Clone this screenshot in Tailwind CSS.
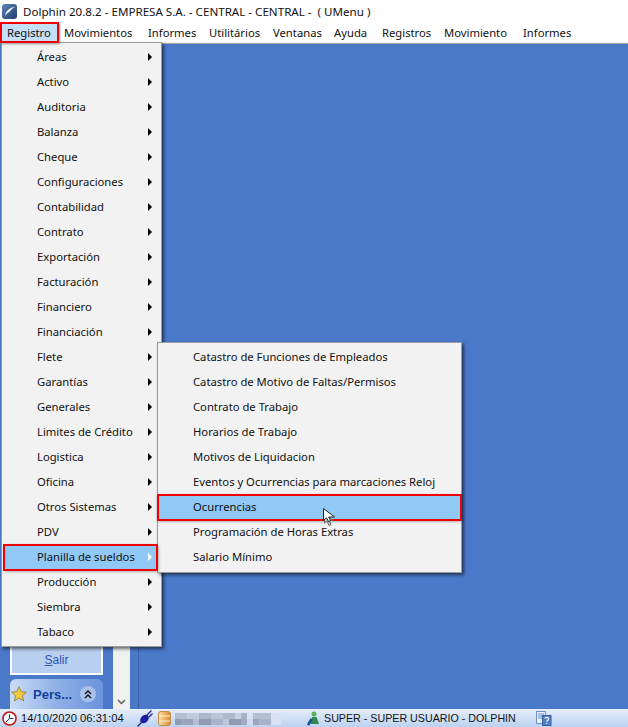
<!DOCTYPE html>
<html lang="es">
<head>
<meta charset="UTF-8">
<title>Dolphin</title>
<script src="https://cdn.jsdelivr.net/npm/@tailwindcss/browser@4"></script>
</head>
<body class="w-[628px] h-[727px] overflow-hidden relative font-['Noto_Sans',sans-serif] text-[11.25px] text-[#111]">
<div class="flex flex-col h-[727px]">
  <!-- title bar -->
  <div class="h-[22px] bg-white flex items-center pl-[2px] gap-[6px] shrink-0">
    <svg width="15" height="15" viewBox="0 0 15 15" class="mt-[1px]"><defs><linearGradient id="lg" x1="0" y1="0" x2="1" y2="1"><stop offset="0" stop-color="#5f86b8"/><stop offset="1" stop-color="#1f3f70"/></linearGradient></defs><rect width="15" height="15" rx="3" fill="url(#lg)"/><path d="M3 12C3.500 7.500 7 3.500 13 3C10.500 4.500 8.500 5.500 7.500 8C5.800 8.500 4.300 10 3 12Z" fill="#eef4fb"/></svg>
    <span class="text-[11.6px] leading-none mt-[2px] whitespace-nowrap">Dolphin 20.8.2 - EMPRESA S.A. - CENTRAL - CENTRAL -&nbsp; ( UMenu )</span>
  </div>
  <!-- menu bar -->
  <div class="h-[20px] bg-white flex items-center pl-[7px] pt-[2px] shrink-0">
    <span class="w-[57px]">Registro</span>
    <span class="w-[84px]">Movimientos</span>
    <span class="w-[61px]">Informes</span>
    <span class="w-[64px]">Utilitários</span>
    <span class="w-[61px]">Ventanas</span>
    <span class="w-[48px]">Ayuda</span>
    <span class="w-[62px]">Registros</span>
    <span class="w-[79px]">Movimiento</span>
    <span>Informes</span>
  </div>
  <div class="h-[2px] bg-[#f0f0f0] border-b border-[#a8a8a8] shrink-0"></div>
  <!-- work area -->
  <div class="flex-1 flex bg-[#4a79c9] min-h-0">
    <div class="w-[139px] shrink-0 flex border-r border-[#3b62a6]">
      <div class="w-[113px] shrink-0 flex flex-col justify-end pl-[10px] pr-[10px]">
        <div class="h-[29px] bg-[#b9cff0] border-x-2 border-b-2 border-white flex items-center justify-center text-[#2a56b5] font-['Liberation_Sans',sans-serif] text-[12px]"><span><span class="underline">S</span>alir</span></div>
        <div class="h-[30px] mt-[4px] rounded-t-[6px] bg-gradient-to-r from-[#cbdcf6] via-[#8fb0e6] to-[#6c94dc] flex items-center pl-[1px]">
          <svg width="16" height="16" viewBox="0 0 16 16"><path d="M8 .8L10.200 5.700L15.500 6.200L11.400 9.700L12.700 15L8 12.100L3.300 15L4.600 9.700L.5 6.200L5.800 5.700Z" fill="#f5c93c" stroke="#857a45" stroke-width="0.800"/></svg>
          <span class="ml-[6px] w-[47px] font-bold text-[#12409e] text-[13px] leading-none font-['Liberation_Sans',sans-serif]">Pers...</span>
          <span class="w-[16px] h-[16px] rounded-full bg-[#a8c0ea] flex items-center justify-center">
            <svg width="8" height="9" viewBox="0 0 8 9" fill="none" stroke="#111" stroke-width="1.300"><path d="M1 4L4 1L7 4M1 8L4 5L7 8"/></svg>
          </span>
        </div>
      </div>
      <div class="w-[17px] shrink-0 bg-[#f0f0f0] flex flex-col justify-end items-center pb-[4px]">
        <svg width="9" height="6" viewBox="0 0 9 6" fill="none" stroke="#606060" stroke-width="1.500"><path d="M1 1L4.500 4.500L8 1"/></svg>
      </div>
    </div>
    <div class="flex-1"></div>
  </div>
  <!-- status bar -->
  <div class="h-[18px] shrink-0 border-t border-[#e6eefb] bg-gradient-to-b from-[#e3edfb] to-[#bcd2f1] flex items-center font-['Liberation_Sans',sans-serif] text-[11.2px]">
    <svg class="ml-[2px]" width="15" height="15" viewBox="0 0 15 15"><circle cx="7.500" cy="7.500" r="6.500" fill="#fff" stroke="#c01818" stroke-width="1.600"/><path d="M7.500 3.500V7.500H11.500M4 11L7.500 7.500" stroke="#1a2a6a" stroke-width="1" fill="none"/></svg>
    <span class="ml-[4px] w-[116px] whitespace-nowrap leading-none">14/10/2020 06:31:04</span>
    <svg width="16" height="17" viewBox="0 0 16 17"><path d="M.5 16.500L4.500 12.500" stroke="#1c1c9c" stroke-width="1.200"/><ellipse cx="7.500" cy="9" rx="3.600" ry="5" transform="rotate(45 7.500 9)" fill="#1c1c9c"/><path d="M10 5L14.500 .5M12 7L15.500 3.500" stroke="#1c1c9c" stroke-width="1.200"/></svg>
    <svg class="ml-[5px]" width="13" height="15" viewBox="0 0 13 15"><defs><linearGradient id="db" x1="0" x2="1" y1="0" y2="0"><stop offset="0" stop-color="#fbe0a8"/><stop offset="1" stop-color="#d88a2c"/></linearGradient></defs><rect x=".5" y=".5" width="12" height="14" rx="2.500" fill="url(#db)" stroke="#c48a48"/><path d="M1 5H12M1 10H12" stroke="#fff3d6" stroke-width="1"/></svg>
    <svg class="ml-[4px]" width="106" height="12" viewBox="0 0 106 12" shape-rendering="crispEdges">
      <rect width="106" height="12" fill="#cfdaed"/>
      <rect x="0" y="0" width="12" height="6" fill="#b4bfd2"/><rect x="12" y="0" width="12" height="6" fill="#c2cbdb"/><rect x="24" y="0" width="12" height="6" fill="#aab6cb"/><rect x="36" y="0" width="12" height="6" fill="#bcc6d8"/><rect x="48" y="0" width="12" height="6" fill="#aeb9cc"/><rect x="60" y="0" width="6" height="6" fill="#c8d2e3"/><rect x="66" y="0" width="6" height="6" fill="#a9b4c8"/><rect x="72" y="0" width="6" height="6" fill="#dbe4f3"/><rect x="78" y="0" width="18" height="6" fill="#b4bfd2"/>
      <rect x="0" y="6" width="6" height="6" fill="#8e9bb2"/><rect x="6" y="6" width="12" height="6" fill="#98a4ba"/><rect x="18" y="6" width="6" height="6" fill="#b4bfd2"/><rect x="24" y="6" width="12" height="6" fill="#8e9bb2"/><rect x="36" y="6" width="12" height="6" fill="#a9b4c8"/><rect x="48" y="6" width="6" height="6" fill="#bcc6d8"/><rect x="54" y="6" width="12" height="6" fill="#8e9bb2"/><rect x="66" y="6" width="6" height="6" fill="#a0acc2"/><rect x="72" y="6" width="6" height="6" fill="#cfdaed"/><rect x="78" y="6" width="6" height="6" fill="#9aa6bc"/><rect x="84" y="6" width="12" height="6" fill="#a9b4c8"/>
      <rect x="96" y="0" width="10" height="12" fill="#d8e2f2"/>
    </svg>
    <svg class="ml-[26px]" width="13" height="15" viewBox="0 0 13 15"><circle cx="7" cy="3" r="2.500" fill="#5fb05a"/><path d="M3 13L5 6H9.500L12 13Z" fill="#2e8a4a"/><path d="M1 14L4.500 8" stroke="#1c4f9c" stroke-width="2.500"/></svg>
    <span class="ml-[4px] w-[212px] text-[10.7px] leading-none whitespace-nowrap">SUPER - SUPER USUARIO - DOLPHIN</span>
    <svg width="16" height="15" viewBox="0 0 16 15"><rect x=".5" y=".5" width="9" height="12" fill="#e9f0fb" stroke="#6f8fc4"/><path d="M2 3H8M2 5H8M2 7H8" stroke="#6f8fc4"/><rect x="6.500" y="4.500" width="8.500" height="10" fill="#4f7fc9" stroke="#33609f"/><path d="M9 7.500C9.500 6 12.500 6 12.500 8C12.500 9.300 10.800 9.300 10.800 10.800M10.800 12V13" stroke="#fff" stroke-width="1.200" fill="none"/></svg>
  </div>
</div>

<!-- highlight on the opened menu-bar item -->
<div class="absolute left-0 top-[22px] w-[59px] h-[21px] border-2 border-[#f00000] bg-[#c5dff6] pl-[5px] flex items-center pt-[2px] shadow-[1px_1px_2px_rgba(0,0,0,0.4)] z-10">Registro</div>

<!-- open menu -->
<div class="absolute left-[1px] top-[42px] w-[161px] h-[605px] bg-[#f2f2f2] border border-[#9a9a9a] shadow-[2px_2px_3px_rgba(0,0,0,0.55)] pt-[2px]">
  <div class="flex items-center justify-between h-[25px] pb-[1px] pl-[35px] pr-[9px]"><span>Áreas</span><i class="w-0 h-0 border-y-[4px] border-l-[4px] border-y-transparent border-l-black"></i></div>
  <div class="flex items-center justify-between h-[25px] pb-[1px] pl-[35px] pr-[9px]"><span>Activo</span><i class="w-0 h-0 border-y-[4px] border-l-[4px] border-y-transparent border-l-black"></i></div>
  <div class="flex items-center justify-between h-[25px] pb-[1px] pl-[35px] pr-[9px]"><span>Auditoria</span><i class="w-0 h-0 border-y-[4px] border-l-[4px] border-y-transparent border-l-black"></i></div>
  <div class="flex items-center justify-between h-[25px] pb-[1px] pl-[35px] pr-[9px]"><span>Balanza</span><i class="w-0 h-0 border-y-[4px] border-l-[4px] border-y-transparent border-l-black"></i></div>
  <div class="flex items-center justify-between h-[25px] pb-[1px] pl-[35px] pr-[9px]"><span>Cheque</span><i class="w-0 h-0 border-y-[4px] border-l-[4px] border-y-transparent border-l-black"></i></div>
  <div class="flex items-center justify-between h-[25px] pb-[1px] pl-[35px] pr-[9px]"><span>Configuraciones</span><i class="w-0 h-0 border-y-[4px] border-l-[4px] border-y-transparent border-l-black"></i></div>
  <div class="flex items-center justify-between h-[25px] pb-[1px] pl-[35px] pr-[9px]"><span>Contabilidad</span><i class="w-0 h-0 border-y-[4px] border-l-[4px] border-y-transparent border-l-black"></i></div>
  <div class="flex items-center justify-between h-[25px] pb-[1px] pl-[35px] pr-[9px]"><span>Contrato</span><i class="w-0 h-0 border-y-[4px] border-l-[4px] border-y-transparent border-l-black"></i></div>
  <div class="flex items-center justify-between h-[25px] pb-[1px] pl-[35px] pr-[9px]"><span>Exportación</span><i class="w-0 h-0 border-y-[4px] border-l-[4px] border-y-transparent border-l-black"></i></div>
  <div class="flex items-center justify-between h-[25px] pb-[1px] pl-[35px] pr-[9px]"><span>Facturación</span><i class="w-0 h-0 border-y-[4px] border-l-[4px] border-y-transparent border-l-black"></i></div>
  <div class="flex items-center justify-between h-[25px] pb-[1px] pl-[35px] pr-[9px]"><span>Financiero</span><i class="w-0 h-0 border-y-[4px] border-l-[4px] border-y-transparent border-l-black"></i></div>
  <div class="flex items-center justify-between h-[25px] pb-[1px] pl-[35px] pr-[9px]"><span>Financiación</span><i class="w-0 h-0 border-y-[4px] border-l-[4px] border-y-transparent border-l-black"></i></div>
  <div class="flex items-center justify-between h-[25px] pb-[1px] pl-[35px] pr-[9px]"><span>Flete</span><i class="w-0 h-0 border-y-[4px] border-l-[4px] border-y-transparent border-l-black"></i></div>
  <div class="flex items-center justify-between h-[25px] pb-[1px] pl-[35px] pr-[9px]"><span>Garantías</span><i class="w-0 h-0 border-y-[4px] border-l-[4px] border-y-transparent border-l-black"></i></div>
  <div class="flex items-center justify-between h-[25px] pb-[1px] pl-[35px] pr-[9px]"><span>Generales</span><i class="w-0 h-0 border-y-[4px] border-l-[4px] border-y-transparent border-l-black"></i></div>
  <div class="flex items-center justify-between h-[25px] pb-[1px] pl-[35px] pr-[9px]"><span>Limites de Crédito</span><i class="w-0 h-0 border-y-[4px] border-l-[4px] border-y-transparent border-l-black"></i></div>
  <div class="flex items-center justify-between h-[25px] pb-[1px] pl-[35px] pr-[9px]"><span>Logistica</span><i class="w-0 h-0 border-y-[4px] border-l-[4px] border-y-transparent border-l-black"></i></div>
  <div class="flex items-center justify-between h-[25px] pb-[1px] pl-[35px] pr-[9px]"><span>Oficina</span><i class="w-0 h-0 border-y-[4px] border-l-[4px] border-y-transparent border-l-black"></i></div>
  <div class="flex items-center justify-between h-[25px] pb-[1px] pl-[35px] pr-[9px]"><span>Otros Sistemas</span><i class="w-0 h-0 border-y-[4px] border-l-[4px] border-y-transparent border-l-black"></i></div>
  <div class="flex items-center justify-between h-[25px] pb-[1px] pl-[35px] pr-[9px]"><span>PDV</span><i class="w-0 h-0 border-y-[4px] border-l-[4px] border-y-transparent border-l-black"></i></div>
  <div class="flex items-center justify-between h-[25px] pb-[1px] ml-[2px] mr-[4px] pl-[33px] pr-[5px] bg-[#90c8f6] outline-2 -outline-offset-1 outline-[#f00000] shadow-[1px_1px_3px_rgba(0,0,0,0.5)] relative z-10"><span>Planilla de sueldos</span><i class="w-0 h-0 border-y-[4px] border-l-[4px] border-y-transparent border-l-white"></i></div>
  <div class="flex items-center justify-between h-[25px] pb-[1px] pl-[35px] pr-[9px]"><span>Producción</span><i class="w-0 h-0 border-y-[4px] border-l-[4px] border-y-transparent border-l-black"></i></div>
  <div class="flex items-center justify-between h-[25px] pb-[1px] pl-[35px] pr-[9px]"><span>Siembra</span><i class="w-0 h-0 border-y-[4px] border-l-[4px] border-y-transparent border-l-black"></i></div>
  <div class="flex items-center justify-between h-[25px] pb-[1px] pl-[35px] pr-[9px]"><span>Tabaco</span><i class="w-0 h-0 border-y-[4px] border-l-[4px] border-y-transparent border-l-black"></i></div>
</div>

<!-- submenu -->
<div class="absolute left-[157px] top-[342px] w-[305px] h-[231px] bg-[#f2f2f2] border border-[#9a9a9a] shadow-[2px_2px_3px_rgba(0,0,0,0.55)] pt-[2px]">
  <div class="flex items-center h-[25px] pb-[1px] pl-[35px]">Catastro de Funciones de Empleados</div>
  <div class="flex items-center h-[25px] pb-[1px] pl-[35px]">Catastro de Motivo de Faltas/Permisos</div>
  <div class="flex items-center h-[25px] pb-[1px] pl-[35px]">Contrato de Trabajo</div>
  <div class="flex items-center h-[25px] pb-[1px] pl-[35px]">Horarios de Trabajo</div>
  <div class="flex items-center h-[25px] pb-[1px] pl-[35px]">Motivos de Liquidacion</div>
  <div class="flex items-center h-[25px] pb-[1px] pl-[35px]">Eventos y Ocurrencias para marcaciones Reloj</div>
  <div class="flex items-center h-[25px] pb-[1px] pl-[35px] bg-[#90c8f6] outline-2 -outline-offset-1 outline-[#f00000] shadow-[0_1px_3px_rgba(0,0,0,0.5)] relative">Ocurrencias</div>
  <div class="flex items-center h-[25px] pb-[1px] pl-[35px]">Programación de Horas Extras</div>
  <div class="flex items-center h-[25px] pb-[1px] pl-[35px]">Salario Mínimo</div>
</div>

<!-- mouse pointer -->
<svg class="absolute left-[323px] top-[508px]" width="14" height="19" viewBox="0 0 14 19"><path d="M1.500 6L1.500 15L4 13L6 17.500L8 16.500L6.500 12.500L10 12.500Z" fill="#c8c8c8" stroke="#666" stroke-width="1"/><path d="M.5 .5V12.500L3.500 9.800L5.500 13.500L7.500 12.500L5.700 9H11.500Z" fill="#fff" stroke="#222" stroke-width="1"/></svg>
</body>
</html>
